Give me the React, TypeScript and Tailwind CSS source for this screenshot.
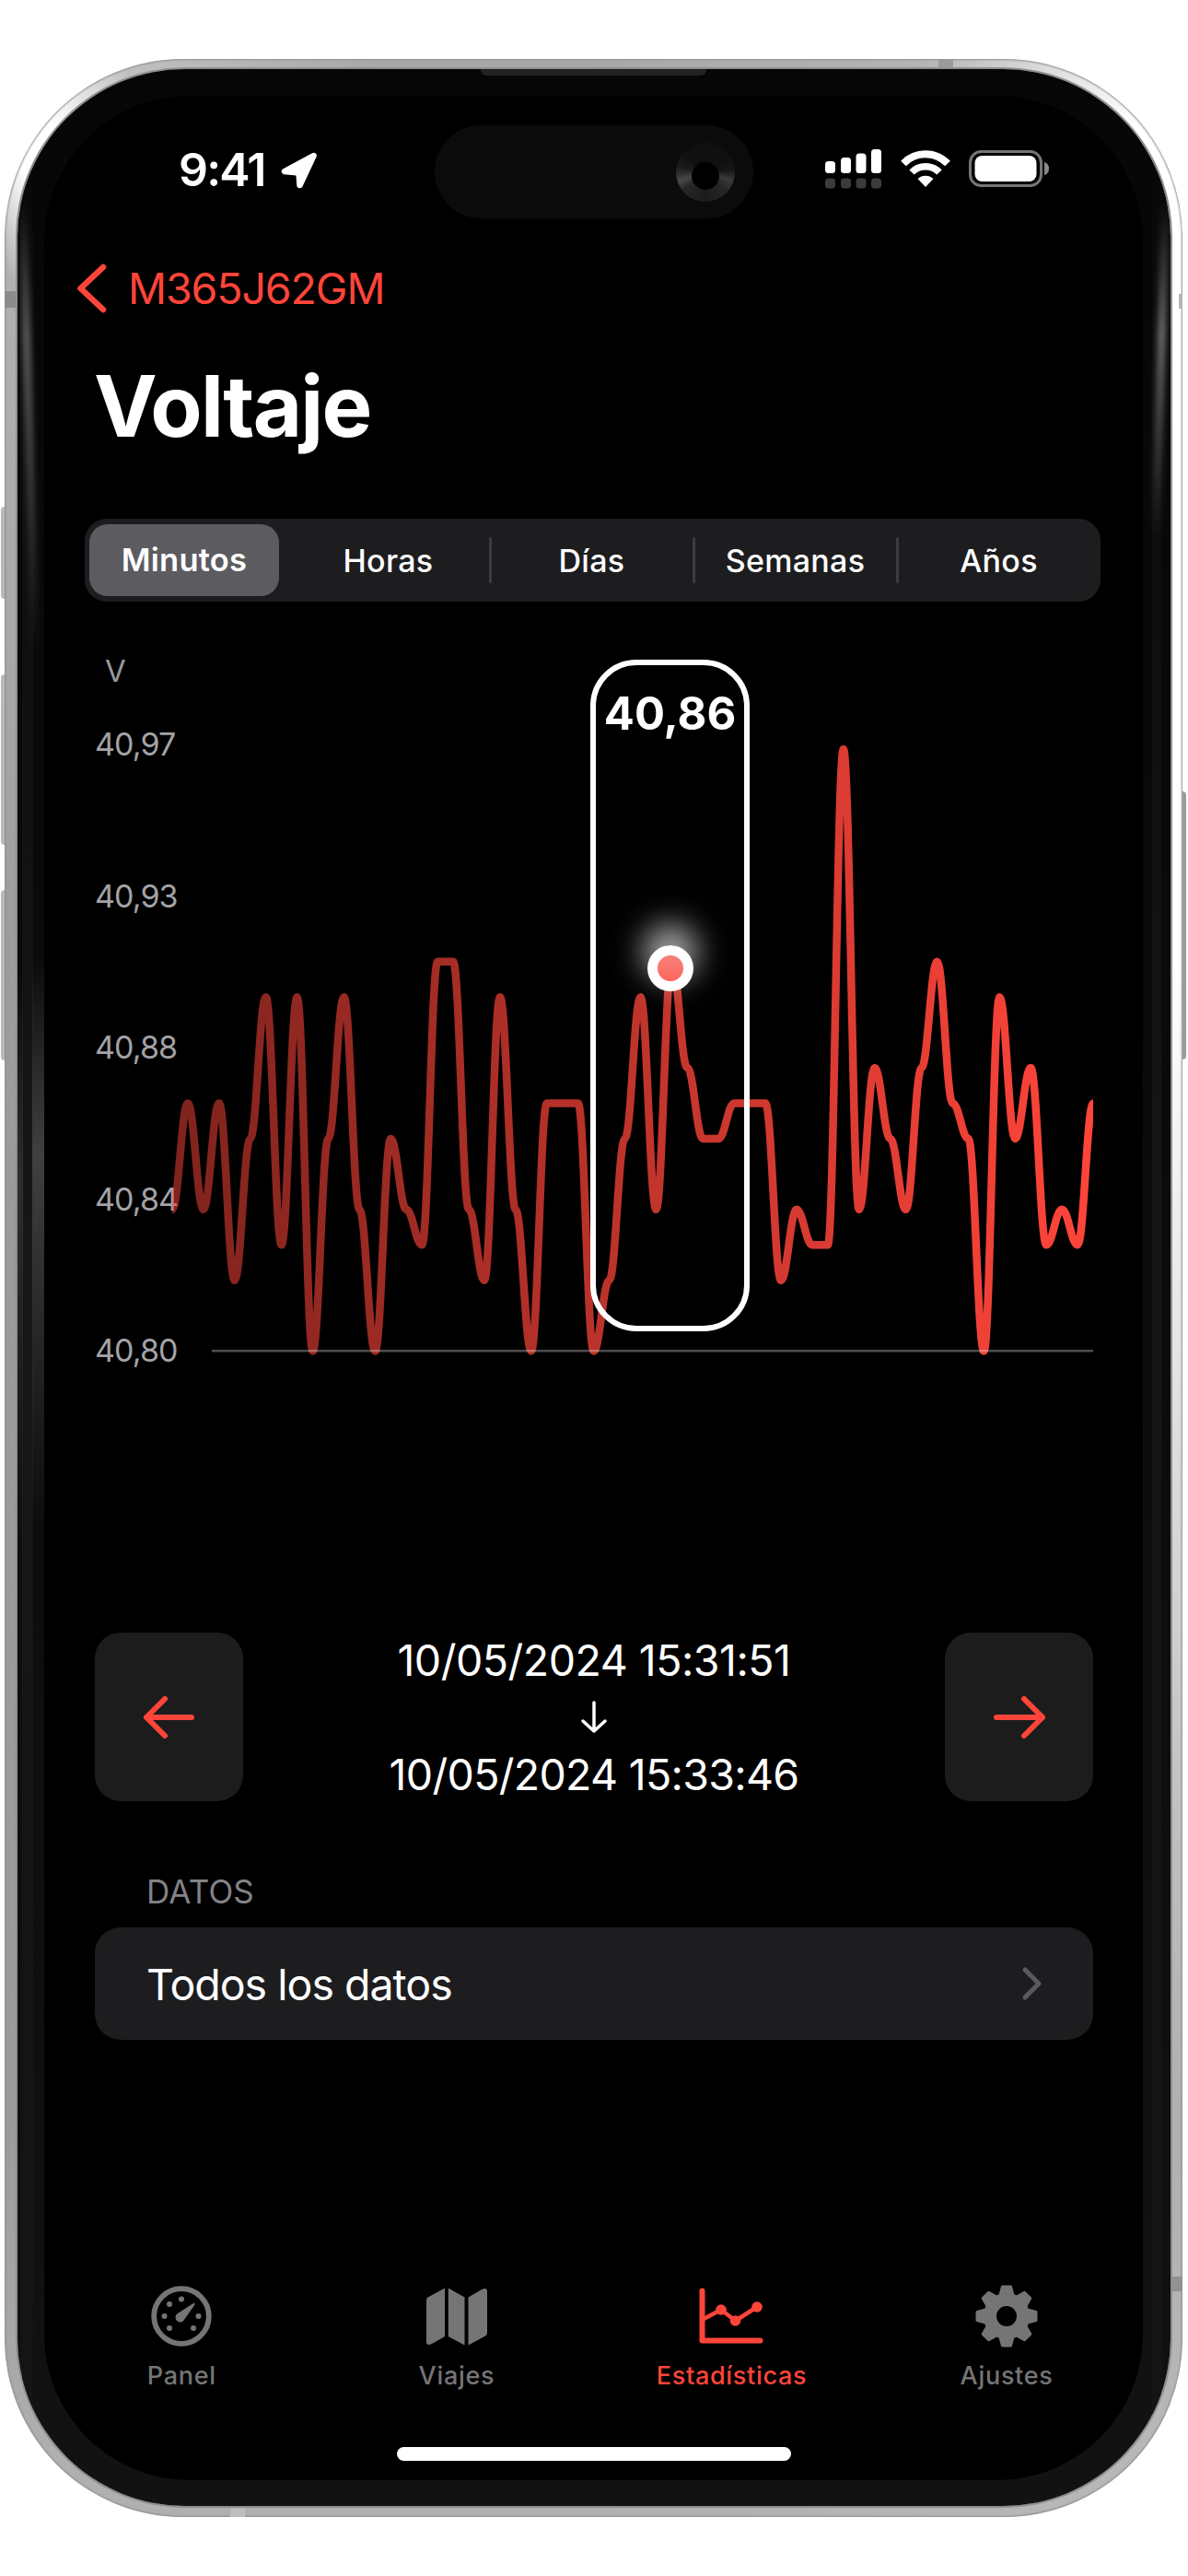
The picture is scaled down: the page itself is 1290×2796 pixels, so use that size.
import type { ReactNode } from "react";

const values = [
  4, 7, 4, 7, 2, 6, 10, 3, 10, 0, 6, 10, 4, 0, 6, 4, 3, 11, 11, 4, 2, 10, 4, 0,
  7, 7, 7, 0, 2, 6, 10, 4, 11, 8, 6, 6, 7, 7, 7, 2, 4, 3, 3, 17, 4, 8, 6, 4, 8,
  11, 7, 6, 0, 10, 6, 8, 3, 4, 3, 7,
];

const STEP_X = 16.95;
const STEP_Y = 38.43;
const BASE_Y = 757.5;

const buildPath = (points: number[]) => {
  const k = STEP_X * 0.4;
  return points
    .map((v, i) => {
      const x = i * STEP_X;
      const y = BASE_Y - v * STEP_Y;
      if (i === 0) return `M${x} ${y}`;
      const prevX = (i - 1) * STEP_X;
      const prevY = BASE_Y - points[i - 1] * STEP_Y;
      return `C${prevX + k} ${prevY} ${x - k} ${y} ${x} ${y}`;
    })
    .join(" ");
};

const StatusBar = () => (
  <div className="flex h-[160px] items-start">
    <div className="flex pl-[146px] pt-[50px]">
      <span className="w-[100px] text-[50px] font-semibold leading-[60px] tracking-[-1.8px]">
        9:41
      </span>
      <svg className="ml-[11px] mt-[11px] h-[40px] w-[40px]" viewBox="0 0 40 40">
        <path
          d="M35.500 4L4 21L19.500 22.500L20.500 36Z"
          fill="white"
          stroke="white"
          strokeWidth="6.500"
          strokeLinejoin="round"
        />
      </svg>
    </div>
    <div className="ml-auto flex pr-[101px] pt-[57px]">
      <svg className="h-[44px] w-[62px]" viewBox="0 0 62 44">
        <g fill="white">
          <rect x="0" y="14" width="11" height="13" rx="3.5" />
          <rect x="17" y="10" width="11" height="17" rx="3.5" />
          <rect x="33.500" y="5.500" width="11" height="21.500" rx="3.5" />
          <rect x="50" y="1" width="11" height="26" rx="3.5" />
        </g>
        <g fill="#3b3b3b">
          <rect x="0" y="32.500" width="11" height="11" rx="3.500" />
          <rect x="17" y="32.500" width="11" height="11" rx="3.500" />
          <rect x="33.500" y="32.500" width="11" height="11" rx="3.500" />
          <rect x="50" y="32.500" width="11" height="11" rx="3.500" />
        </g>
      </svg>
      <svg className="ml-[20px] h-[44px] w-[54px]" viewBox="0 0 54 44">
        <g fill="none" stroke="white">
          <path d="M3 16.500A33.500 33.500 0 0 1 51 16.500" strokeWidth="8" />
          <path d="M12 26A21 21 0 0 1 42 26" strokeWidth="7.500" />
        </g>
        <path d="M27 42L18.500 33A12.500 12.500 0 0 1 35.500 33Z" fill="white" />
      </svg>
      <svg className="ml-[20px] h-[44px] w-[88px]" viewBox="0 0 88 44">
        <rect x="1.5" y="3.500" width="77" height="37" rx="12" fill="none" stroke="#767676" strokeWidth="3" />
        <rect x="6.500" y="8" width="67" height="28" rx="8" fill="white" />
        <path d="M82 15Q87 16.500 87 22T82 29Z" fill="#8a8a8a" />
      </svg>
    </div>
  </div>
);

const segments = ["Minutos", "Horas", "Días", "Semanas", "Años"];

const SegmentedControl = () => (
  <div className="ml-[44px] flex h-[90px] w-[1103px] items-center rounded-[24px] bg-[#1d1d1f] pl-[5px]">
    {segments.map((name, i) => (
      <div
        key={name}
        className={
          i === 0
            ? "mr-[8px] flex h-[78px] w-[206px] items-center justify-center rounded-[20px] bg-[#5c5b60] text-[34.500px] font-semibold tracking-[0.2px]"
            : "relative flex h-[50px] flex-1 items-center justify-center text-[34px] font-medium tracking-[0.3px]"
        }
      >
        {i > 1 && (
          <span className="absolute left-[-1px] top-0 h-[50px] w-[3px] rounded bg-[#3d3d40]" />
        )}
        {name}
      </div>
    ))}
  </div>
);

const axis = ["40,97", "40,93", "40,88", "40,84", "40,80"];

const Chart = () => (
  <div className="relative mt-[56px] h-[800px]">
    <div className="pl-[66px] text-[33px] leading-[39px] text-[#98989b]">V</div>
    <div className="mt-[40px] flex flex-col pl-[55px] text-[34px] tracking-[-0.9px] text-[#a3a3a6]">
      {axis.map((label) => (
        <span key={label} className="h-[164.600px] leading-[40px]">
          {label}
        </span>
      ))}
    </div>
    <svg className="absolute left-[139px] top-0 h-[800px] w-[1000px]" viewBox="0 0 1000 800">
      <defs>
        <linearGradient id="trace" gradientUnits="userSpaceOnUse" x1="0" y1="0" x2="1000" y2="0">
          <stop offset="0" stopColor="#ff453a" stopOpacity="0.5" />
          <stop offset="1" stopColor="#ff453a" />
        </linearGradient>
      </defs>
      <path d={buildPath(values)} fill="none" stroke="url(#trace)" strokeWidth="8.500" strokeLinejoin="round" />
      <rect x="43" y="756" width="957" height="2.500" fill="#ffffff" fillOpacity="0.3" />
    </svg>
    <div className="absolute left-[593px] top-[7px] h-[729px] w-[173px] rounded-[50px] border-[6px] border-white pt-[23px] text-center text-[49px] font-bold leading-[60px]">
      40,86
    </div>
    <div className="absolute left-[655px] top-[317px] size-[50px] rounded-full border-[11px] border-white bg-linear-to-b from-[#f58079] to-[#ff655c] shadow-[0_-18px_34px_4px_rgba(255,255,255,0.7)]" />
  </div>
);

const ArrowButton = ({ children }: { children: ReactNode }) => (
  <button
    type="button"
    className="flex h-[183px] w-[161px] items-center justify-center rounded-[28px] bg-[#1c1c1c]"
  >
    <svg
      className="h-[50px] w-[60px]"
      viewBox="0 0 60 50"
      fill="none"
      stroke="#ff453a"
      strokeWidth="6"
      strokeLinecap="round"
      strokeLinejoin="round"
    >
      {children}
    </svg>
  </button>
);

const RangePicker = () => (
  <div className="mt-[263px] flex h-[183px] justify-between pl-[55px] pr-[54px]">
    <ArrowButton>
      <path d="M54 25H5M25 5L5 25L25 45" />
    </ArrowButton>
    <div className="flex flex-col items-center pt-px text-[46.500px] leading-[58px]">
      <span className="tracking-[-0.5px]">10/05/2024 15:31:51</span>
      <svg
        className="my-[13px] h-[40px] w-[32px]"
        viewBox="0 0 32 40"
        fill="none"
        stroke="white"
        strokeWidth="3.500"
        strokeLinecap="round"
        strokeLinejoin="round"
      >
        <path d="M16 4V35M4 24L16 35L28 24" />
      </svg>
      <span className="tracking-[-0.7px]">10/05/2024 15:33:46</span>
    </div>
    <ArrowButton>
      <path d="M5 25H55M35 5L55 25L35 45" />
    </ArrowButton>
  </div>
);

const PanelIcon = () => (
  <svg className="size-[70px]" viewBox="0 0 70 70" fill="currentColor">
    <circle cx="35" cy="35" r="29.800" fill="none" stroke="currentColor" strokeWidth="5.800" />
    <circle cx="35" cy="16.500" r="3" />
    <circle cx="22" cy="22" r="3" />
    <circle cx="16.500" cy="35" r="3" />
    <circle cx="53.500" cy="35" r="3" />
    <circle cx="22" cy="48" r="3" />
    <circle cx="48" cy="48" r="3" />
    <path d="M48.800 20.500C49.800 21 49.600 22 49.200 23L38.600 38A5.200 5.200 0 1 1 30.200 32.400Z" />
  </svg>
);

const TripsIcon = () => (
  <svg className="size-[70px]" viewBox="0 0 70 70" fill="currentColor">
    <path d="M2 17.500Q2 15.500 3.600 14.500L22 4.500V57L7 65.500Q2 67 2 63Z" />
    <path d="M25.800 4.500L43.500 14.500V66.500L25.800 57Z" />
    <path d="M47.500 14.500L62 6Q68 3.500 68 8V53Q68 55.500 66 56.500L47.500 66.500Z" />
  </svg>
);

const StatsIcon = () => (
  <svg
    className="size-[70px]"
    viewBox="0 0 70 70"
    fill="none"
    stroke="currentColor"
    strokeWidth="6"
    strokeLinecap="round"
    strokeLinejoin="round"
  >
    <path d="M3.500 7.500V61.500H66.500" />
    <path d="M5 38L24 28L39.500 40L63 25" strokeWidth="4.500" />
    <g fill="currentColor" stroke="none">
      <circle cx="24" cy="28" r="5.800" />
      <circle cx="39.500" cy="40" r="5.800" />
      <circle cx="63" cy="25" r="5.800" />
    </g>
  </svg>
);

const SettingsIcon = () => (
  <svg className="size-[70px]" viewBox="0 0 70 70">
    <g fill="currentColor" stroke="currentColor" strokeWidth="3" strokeLinejoin="round">
      {[0, 45, 90, 135, 180, 225, 270, 315].map((angle) => (
        <path key={angle} d="M30.500 3H39.500L43 16H27Z" transform={`rotate(${angle} 35 35)`} />
      ))}
    </g>
    <circle cx="35" cy="35" r="18" fill="none" stroke="currentColor" strokeWidth="14" />
  </svg>
);

const tabs = [
  { name: "Panel", icon: <PanelIcon /> },
  { name: "Viajes", icon: <TripsIcon /> },
  { name: "Estadísticas", icon: <StatsIcon />, active: true },
  { name: "Ajustes", icon: <SettingsIcon /> },
];

const TabBar = () => (
  <nav className="mt-[265px] flex">
    {tabs.map((tab) => (
      <div
        key={tab.name}
        className={
          tab.active
            ? "flex w-[298.600px] shrink-0 flex-col items-center text-[#ff453a]"
            : "flex w-[298.600px] shrink-0 flex-col items-center text-[#757575]"
        }
      >
        {tab.icon}
        <span className="mt-[12px] text-[27px] font-medium leading-[36px] tracking-[0.7px]">
          {tab.name}
        </span>
      </div>
    ))}
  </nav>
);

const Screen = () => (
  <div className="relative flex h-[2588px] w-[1193px] flex-col rounded-[158px] bg-black text-white">
    <div className="absolute left-[424px] top-[32px] h-[101px] w-[346px] rounded-full bg-[#0b0b0b]">
      <div className="absolute left-[262px] top-[19px] size-[64px] rounded-full bg-[conic-gradient(#101010_0deg,#101010_60deg,#171717_85deg,#3a3a3a_108deg,#262626_130deg,#1c1c1c_180deg,#262626_230deg,#484848_252deg,#1c1c1c_280deg,#101010_310deg,#101010_360deg)]">
        <div className="absolute left-[17px] top-[21px] size-[30px] rounded-full bg-black" />
      </div>
    </div>
    <StatusBar />
    <div className="flex h-[98px] items-center pl-[34px] text-[#ff453a]">
      <svg
        className="h-[56px] w-[36px]"
        viewBox="0 0 36 56"
        fill="none"
        stroke="currentColor"
        strokeWidth="6.500"
        strokeLinecap="round"
        strokeLinejoin="round"
      >
        <path d="M30 5L5.500 28L30 51" />
      </svg>
      <span className="ml-[21px] mt-[2px] text-[46.500px] tracking-[-1.100px]">M365J62GM</span>
    </div>
    <h1 className="ml-[54px] mt-[24px] text-[92px] font-bold leading-[110px] tracking-[-1.800px]">
      Voltaje
    </h1>
    <div className="h-[67px]" />
    <SegmentedControl />
    <Chart />
    <RangePicker />
    <div className="mt-[78px] pl-[111px] text-[35px] leading-[40px] tracking-[0.2px] text-[#828287]">
      DATOS
    </div>
    <div className="ml-[55px] mr-[54px] mt-[19px] flex h-[122px] items-center justify-between rounded-[28px] bg-[#1d1d1f] pl-[56px] pr-[53px]">
      <span className="mt-[3px] text-[46.500px] tracking-[-1px]">Todos los datos</span>
      <svg
        className="h-[40px] w-[26px]"
        viewBox="0 0 26 40"
        fill="none"
        stroke="#5a5a5e"
        strokeWidth="5"
        strokeLinecap="round"
        strokeLinejoin="round"
      >
        <path d="M5 5L20 20L5 35" />
      </svg>
    </div>
    <TabBar />
    <div className="absolute bottom-[21px] left-[383px] h-[15px] w-[428px] rounded-full bg-white" />
  </div>
);

// soft light reflections on the glass edge
const Reflections = () => (
  <>
    <div className="absolute left-[5px] top-0 h-full w-[12px] bg-linear-to-b from-transparent via-[#171717] to-[#141414]" />
    <div className="absolute right-[10px] top-0 h-full w-[10px] bg-linear-to-b from-transparent via-[#161616] to-[#141414]" />
    <div className="absolute left-[8px] top-[140px] h-[500px] w-[9px] rotate-[-1.6deg] rounded-full bg-linear-to-b from-transparent via-[#5a5a5a] via-30% to-transparent blur-[3px]" />
    <div className="absolute right-[6px] top-[140px] h-[370px] w-[9px] rotate-[1.6deg] rounded-full bg-linear-to-b from-transparent via-[#6a6a6a] via-40% to-transparent blur-[3px]" />
    <div className="absolute left-0 top-[980px] h-[640px] w-[6px] bg-linear-to-b from-transparent via-[#2e2e2e] via-35% to-transparent" />
    <div className="absolute left-[16px] top-[960px] h-[620px] w-[13px] bg-linear-to-b from-transparent via-[#404040] via-35% to-transparent" />
  </>
);

export default function App() {
  return (
    <div className="relative h-[2796px] w-[1290px] overflow-hidden bg-white pl-[5px] pt-[64px] font-['Inter',sans-serif]">
      <div className="absolute left-px top-[550px] h-[100px] w-[8px] rounded-l-[4px] bg-[#b8b8b8]" />
      <div className="absolute left-px top-[732px] h-[185px] w-[8px] rounded-l-[4px] bg-[#b8b8b8]" />
      <div className="absolute left-px top-[966px] h-[185px] w-[8px] rounded-l-[4px] bg-[#b8b8b8]" />
      <div className="absolute right-[2px] top-[859px] h-[291px] w-[8px] rounded-r-[4px] bg-[#9a9a9a]" />
      <div className="relative h-[2668px] w-[1279px] rounded-[194px] bg-[conic-gradient(#a8a8a8_0deg,#b4b4b4_15deg,#e8e8e8_22deg,#ffffff_25deg,#ffffff_60deg,#e6e6e6_95deg,#d0d0d0_120deg,#b0b0b0_145deg,#b8b8b8_155deg,#b0b0b0_180deg,#b0b0b0_205deg,#9a9a9a_215deg,#9c9c9c_300deg,#b0b0b0_330deg,#ffffff_333deg,#ffffff_335deg,#c0c0c0_339deg,#a8a8a8_350deg)] px-[14px] pb-[12px] pt-[11px] shadow-[inset_0_0_2px_1px_#8f8f8f]">
        <div className="absolute left-0 top-[252px] h-[18px] w-[14px] bg-[#8c8c8c]" />
        <div className="absolute right-0 top-[255px] h-[16px] w-[4px] bg-[#b5b5b5]" />
        <div className="absolute right-0 top-[2407px] h-[16px] w-[11px] bg-[#929292]" />
        <div className="absolute left-[1014px] top-0 h-[11px] w-[16px] bg-[#9a9a9a]" />
        <div className="absolute bottom-0 left-[245px] h-[12px] w-[16px] bg-[#bebebe]" />
        <div className="relative h-[2645px] w-[1252px] overflow-hidden rounded-[182px] bg-linear-to-b from-[#060606] to-[#121212] px-[29px] pb-[28px] pt-[29px] shadow-[0_0_0_2px_#8e8e8e]">
          <Reflections />
          <Screen />
          <div className="absolute left-[503px] top-0 h-[7px] w-[245px] rounded-b-[6px] bg-[#222]" />
        </div>
      </div>
    </div>
  );
}
